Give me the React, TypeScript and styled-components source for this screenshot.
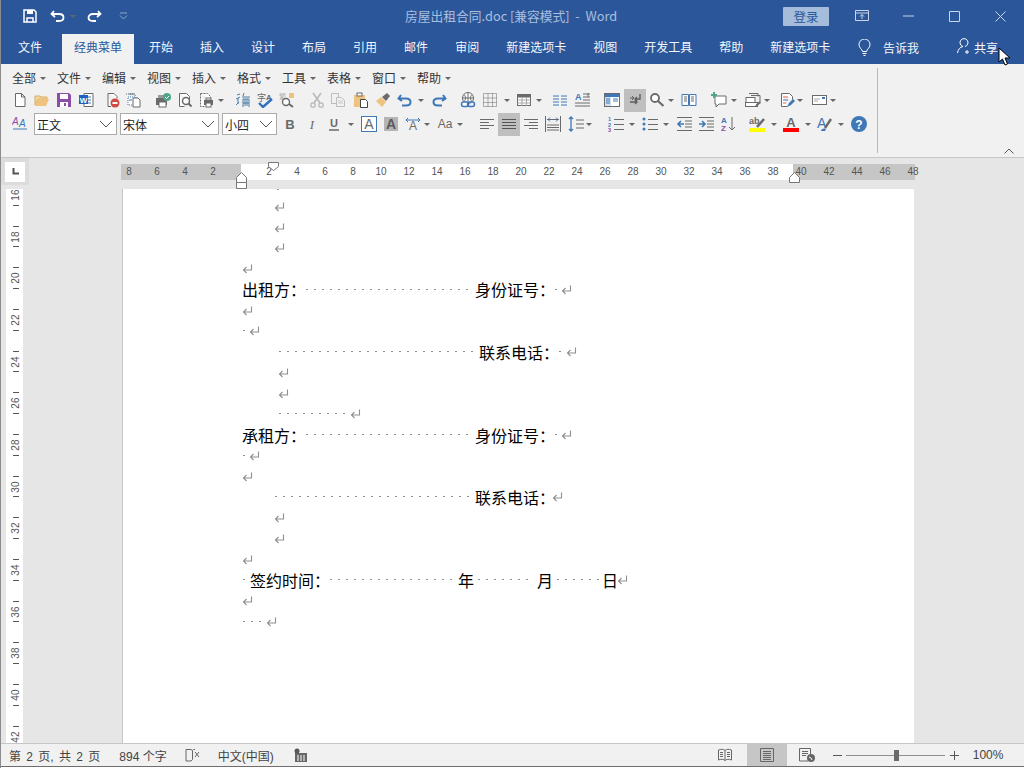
import React from "react";
import styled, { createGlobalStyle } from "styled-components";

const Global = createGlobalStyle`
  html, body { margin: 0; padding: 0; background: #fff; }
  #root { width: 1024px; height: 768px; overflow: hidden; }
`;

const UI = `"Noto Sans CJK SC", "Liberation Sans", sans-serif`;

const Win = styled.div`
  width: 1024px; height: 768px; display: flex; flex-direction: column; position: relative; overflow: hidden;
  box-sizing: border-box; border-left: 1px solid #8c8c8c; font-family: ${UI}; background: #fff;
`;
const TitleBar = styled.div`
  height: 32px; background: #2b579a; display: flex; align-items: center; position: relative; flex: none;
`;
const Qat = styled.div`display: flex; align-items: center; padding-left: 21px;`;
const QatSlot = styled.div<{ $w: number; $ml?: number }>`
  width: ${p => p.$w}px; margin-left: ${p => p.$ml ?? 0}px; display: flex; justify-content: center; align-items: center;
`;
const DocTitle = styled.div`
  position: absolute; left: 404px; top: 6px; font-size: 12.75px; line-height: 20px; color: #a9bfdf; white-space: pre;
`;
const TitleRight = styled.div`margin-left: auto; display: flex; align-items: center; padding-right: 1px;`;
const Login = styled.div`
  width: 46px; height: 19px; background: #a5bcdb; color: #2b579a; font-size: 12.5px; line-height: 19px; text-align: center;
  border-radius: 1px; margin-right: 10px;
`;
const WinBtn = styled.div`width: 46px; display: flex; justify-content: center;`;
const TabBar = styled.div`
  height: 32px; background: #2b579a; display: flex; align-items: flex-end; padding-left: 17px; gap: 27px; position: relative; flex: none;
`;
const Tab = styled.div<{ $active?: boolean }>`
  height: 30px; line-height: 26px; font-size: 12px; white-space: nowrap;
  color: ${p => (p.$active ? "#2b579a" : "#f3f6fb")};
  background: ${p => (p.$active ? "#f1f1f1" : "transparent")};
  ${p => (p.$active ? "padding: 0 12px; margin: 0 -12px 0 -7px;" : "")}
`;
const TabRight = styled.div`
  margin-left: auto; display: flex; align-items: center; height: 27px; align-self: flex-start; margin-top: 2px;
  font-size: 12px; color: #f3f6fb; line-height: 20px; padding-right: 26px;
`;
const Ribbon = styled.div`
  height: 94px; background: #f1f1f1; flex: none; position: relative; box-sizing: border-box;
  border-bottom: 1px solid #c6c6c6; padding-top: 4px;
`;
const MenuRow = styled.div`display: flex; height: 20px; padding-left: 11px; align-items: center;`;
const MenuItem = styled.div`
  width: 45px; font-size: 12px; color: #333; display: flex; align-items: center; gap: 4px; white-space: nowrap; line-height: 20px;
`;
const Caret = styled.i<{ $dim?: boolean }>`
  display: block; width: 0; height: 0; border-left: 3px solid transparent; border-right: 3px solid transparent;
  border-top: 3px solid ${p => (p.$dim ? "#888" : "#666")}; flex: none;
`;
const ToolRow = styled.div`display: flex; align-items: center; height: 24px;`;
const ToolSlot = styled.div<{ $ml: number; $w: number; $on?: boolean }>`
  margin-left: ${p => p.$ml}px; width: ${p => p.$w}px; height: 23px; flex: none; display: flex; align-items: center; justify-content: center;
  background: ${p => (p.$on ? "#bfbfbf" : "transparent")};
`;
const Select = styled.div<{ $ml: number; $w: number }>`
  margin-left: ${p => p.$ml}px; width: ${p => p.$w}px; height: 22px; box-sizing: border-box; flex: none; background: #fff; border: 1px solid #ababab;
  display: flex; align-items: center; justify-content: space-between; padding: 0 3px 0 2px; font-size: 12px; color: #222;
`;
const RibbonDivider = styled.div`position: absolute; left: 876px; top: 4px; bottom: 4px; width: 1px; background: #b8b8b8;`;
const Collapse = styled.div`position: absolute; right: 10px; bottom: 3px; line-height: 0;`;

const RulerBar = styled.div`height: 31px; background: #e6e6e6; display: flex; align-items: flex-start; position: relative; flex: none;`;
const Corner = styled.div`
  margin-left: 0; width: 28px; height: 27px; background: #dcdcdc; display: flex; align-items: center; justify-content: center; flex: none;
`;
const CornerBox = styled.div`
  width: 20px; height: 20px; background: #fff; display: flex; align-items: center; justify-content: center;
`;
const Segment = styled.div<{ $w: number; $light?: boolean; $ml: number; $pl: number }>`
  width: ${p => p.$w}px; margin-left: ${p => p.$ml}px; padding-left: ${p => p.$pl}px; height: 16px; margin-top: 6px; flex: none; box-sizing: border-box;
  background: ${p => (p.$light ? "#fff" : "#c6c6c6")}; display: flex;
`;
const RulerNum = styled.div<{ $pull?: boolean }>`
  width: 28px; flex: none; text-align: center; font: 10px/16px "Liberation Sans", sans-serif; color: #555;
  margin-left: ${p => (p.$pull ? -6 : 0)}px;
`;
const Marker = styled.svg<{ $x: number; $y: number }>`position: absolute; left: ${p => p.$x}px; top: ${p => p.$y}px;`;

const Main = styled.div`flex: 1; display: flex; background: #e6e6e6; min-height: 0; overflow: hidden;`;
const VRuler = styled.div`
  margin-left: 5px; width: 17px; background: #fff; flex: none; height: 100%; overflow: hidden; display: flex; flex-direction: column;
`;
const VCell = styled.div`
  height: 41.67px; flex: none; box-sizing: border-box; padding: 10px 0; display: flex; flex-direction: column; align-items: center;
  &:first-child { margin-top: -15px; }
`;
const VTick = styled.i`display: block; width: 6px; height: 1px; background: #555; flex: none; margin-left: 3px;`;
const VNum = styled.div`
  flex: 1; writing-mode: vertical-rl; transform: rotate(180deg); font: 10px/10px "Liberation Sans", sans-serif; color: #555;
  display: flex; align-items: center; justify-content: center; margin-left: 3px;
`;
const PageWrap = styled.div`margin-left: 99px; flex: none; width: 792px; box-sizing: border-box; background: #fff; border-left: 1px solid #c6c6c6; padding: 7px 0 0 119px;`;
const TopDot = styled.div`width: 2px; height: 1px; margin: -7px 0 6px 35px; background: #999;`;
const Line = styled.div<{ $indent?: number }>`
  height: 20.75px; display: flex; align-items: center; padding-left: ${p => p.$indent ?? 0}px; font-size: 16px; color: #000; white-space: nowrap;
`;
const Spaces = styled.span<{ $w: number; $ml?: number }>`
  display: block; width: ${p => p.$w}px; height: 1px; margin-left: ${p => p.$ml ?? 0}px; flex: none;
  background: repeating-linear-gradient(90deg, #8d8d8d 0 2px, transparent 2px 8px);
`;
const Word = styled.span<{ $ml?: number }>`margin-left: ${p => p.$ml ?? 0}px; font-family: ${UI}; flex: none;`;
const ReturnMark = styled.svg<{ $ml?: number }>`margin-left: ${p => p.$ml ?? 0}px; flex: none;`;

const Status = styled.div`
  height: 22px; flex: none; background: #f1f1f1; border-top: 1px solid #c6c6c6; box-sizing: content-box; display: flex; align-items: center;
  font-size: 12px; color: #444; padding-left: 8px; position: relative;
`;
const StatusText = styled.span<{ $ml: number; $ws?: number }>`
  margin-left: ${p => p.$ml}px; white-space: pre; font-family: "Liberation Sans", "Noto Sans CJK SC", sans-serif; word-spacing: ${p => p.$ws ?? 0}px;
`;
const StatusIcon = styled.div<{ $ml: number; $w?: number; $on?: boolean }>`
  margin-left: ${p => p.$ml}px; width: ${p => p.$w ?? 16}px; height: 22px; flex: none; display: flex; align-items: center; justify-content: center;
  background: ${p => (p.$on ? "#c6c6c6" : "transparent")};
`;
const Slider = styled.div`width: 99px; height: 1px; background: #8f8f8f; position: relative; flex: none;`;
const Thumb = styled.i`position: absolute; left: 48px; top: -5px; width: 5px; height: 11px; background: #6b6b6b; display: block;`;
const Foot = styled.div`height: 1px; background: #6e6e6e; flex: none;`;
const FootStrip = styled.div`height: 1px; background: #fff; flex: none;`;
const Pointer = styled.svg`position: absolute; left: 997px; top: 47px;`;

const Svg: React.FC<{ children: React.ReactNode; w?: number; h?: number }> = ({ children, w = 16, h = 16 }) => (
  <svg width={w} height={h} viewBox={`0 0 ${w} ${h}`} fill="none">{children}</svg>
);

const B = "#3f78b7", G = "#6a6a6a", P = "#8a4ea6", T = "#eec27f", L = "#a8a8a8";

const icons: Record<string, React.ReactNode> = {
  newDoc: <path d="M3.5 1.5h6l3.5 3.5v9.5h-9.5z M9.5 1.5V5H13" fill="#fff" stroke={G} />,
  open: <><path d="M1 13V4h5l1 1h6v2H4z" fill="#f3d7a5" stroke="#d9ac62" /><path d="M1 14l3-7h11l-3 7z" fill={T} /></>,
  save: <><path d="M1 1h12l2 2v12H1z" fill={P} /><rect x="4" y="2" width="8" height="5" fill="#fff" /><rect x="4" y="10" width="8" height="5" fill="#fff" /><rect x="8" y="11" width="2" height="3" fill={P} /></>,
  word: <><path d="M6 1.5h9v13H6z" fill="#fff" stroke={G} /><path d="M9 5h4M9 8h4M9 11h4" stroke={B} /><rect x="1" y="3" width="9" height="9" fill="#1f5fbf" /><text x="5.5" y="10.5" fontSize="8" fontWeight="700" textAnchor="middle" fill="#fff" fontFamily="Liberation Sans">W</text></>,
  stop: <><path d="M3 1.5h6l3 3v2M3 1.5v13h3" stroke={G} fill="#fff" /><circle cx="10" cy="11" r="4.5" fill="#d24a43" /><rect x="7.5" y="10" width="5" height="2" fill="#fff" /></>,
  pages: <><path d="M1 2h9v3" stroke={G} strokeDasharray="1 1" /><path d="M3 5h8v8H3z" fill="#fff" stroke={B} strokeDasharray="1 1" /><path d="M8 6h5l2 2v7H8z" fill="#fff" stroke={G} /><path d="M4 2h5M4 8h3" stroke={B} /></>,
  printer: <><rect x="1" y="6" width="11" height="7" fill={G} /><rect x="4" y="10" width="7" height="5" fill="#fff" stroke={G} /><rect x="3" y="3" width="7" height="3" fill="#9a9a9a" /><circle cx="12" cy="5" r="4" fill="#4fa58a" /><path d="M10 5l1.5 1.5L14 4" stroke="#fff" /></>,
  preview: <><path d="M2.5 1.5h7l3 3v4M2.5 1.5v13h5" fill="#fff" stroke={G} /><circle cx="9" cy="9" r="3.5" stroke={G} fill="#fff" strokeWidth="1.5" /><path d="M11.5 11.5l3 3" stroke={G} strokeWidth="2" /></>,
  printDoc: <><path d="M2.5 1.5h7l3 3v3M2.5 1.5v13h5" fill="#fff" stroke={G} strokeDasharray="2 1" /><rect x="6" y="8" width="9" height="5" fill={G} /><rect x="8" y="6" width="5" height="2" fill="#fff" stroke={G} /><rect x="8" y="11" width="5" height="4" fill="#fff" stroke={G} /></>,
  simp: <><path d="M2 3l3-1M1 7l4-2M3 6v6M1 13l3-3" stroke="#4a7da8" /><path d="M9 1l-1 3M7 5h8M8 7h6v8M8 7v8M10 7v7M12 7v7M8 11h6" stroke="#4a7da8" /></>,
  spell: <><text x="0" y="9" fontSize="9" fill={G} fontFamily="Noto Sans CJK SC">字</text><text x="9" y="8" fontSize="8" fontWeight="700" fill={G} fontFamily="Liberation Sans">A</text><path d="M2 11l4 4 9-8" stroke="#2f6fbf" strokeWidth="2.4" /></>,
  research: <><text x="0" y="7" fontSize="7" fill={L} fontFamily="Noto Sans CJK SC">繁</text><path d="M10 1h5v5h-5z" fill={T} /><circle cx="7" cy="10" r="3.5" stroke={G} strokeWidth="1.4" fill="#fff" /><path d="M10 12l4 3" stroke={G} strokeWidth="2" /></>,
  cut: <><path d="M4 1l7 10M12 1L5 11" stroke="#b9b9b9" strokeWidth="1.6" /><circle cx="4" cy="13" r="2.2" stroke="#b9b9b9" strokeWidth="1.3" /><circle cx="12" cy="13" r="2.2" stroke="#b9b9b9" strokeWidth="1.3" /></>,
  copy: <><path d="M1.5 1.5h7v10h-7z" fill="#f1f1f1" stroke="#bdbdbd" /><path d="M6.5 5.5h5l3 3v6h-8z" fill="#f1f1f1" stroke="#bdbdbd" /><path d="M8 9h5M8 11h5" stroke="#c9c9c9" /></>,
  paste: <><path d="M1 3h11v12H1z" fill={T} /><rect x="4" y="1" width="5" height="3" fill="#fff" stroke={G} /><path d="M7.5 7.5h5l2 2v6h-7z" fill="#fff" stroke="#444" /></>,
  brush: <><path d="M1 9l5-4 5 5-4 5z" fill={T} /><path d="M7 5l5-4 3 3-4 5z" fill={G} /></>,
  undo: <path d="M4 3L1.500 6.500 5 9M2 6.500h7c6 0 6 7 0 7H5" stroke={B} strokeWidth="2" />,
  redo: <path d="M12 3l2.500 3.500L11 9M14 6.500H7c-6 0-6 7 0 7h4" stroke={B} strokeWidth="2" />,
  link: <><circle cx="8" cy="6" r="5.500" stroke={G} fill="#fff" /><path d="M2.500 6h11M8 .5v11M4 2.500c2 2 2 5 0 7M12 2.500c-2 2-2 5 0 7" stroke={G} /><rect x="1.500" y="10" width="7" height="4.500" rx="2.200" stroke={B} strokeWidth="1.500" fill="#fff" /><rect x="7.500" y="10" width="7" height="4.500" rx="2.200" stroke={B} strokeWidth="1.500" /></>,
  grid: <path d="M1.500 1.500h13v13h-13zM6 1.500v13M10.500 1.500v13M1.500 6h13M1.500 10.500h13" stroke={G} strokeDasharray="1 1" />,
  table: <><rect x="1.500" y="2.500" width="13" height="11" fill="#fff" stroke={G} /><rect x="1.500" y="2.500" width="13" height="3" fill={G} /><path d="M1.500 8h13M1.500 11h13M6 5v9M10.500 5v9" stroke={L} /></>,
  cols: <path d="M1 4h6M1 7h6M1 10h6M1 13h6M9 4h6M9 7h6M9 10h6M9 13h6" stroke={B} />,
  dirText: <><text x="1" y="8" fontSize="9" fontWeight="700" fill={B} fontFamily="Liberation Sans">A</text><path d="M9 2h7M9 5h7M9 8h7M1 11h15M1 14h15" stroke={G} /><path d="M14 1v4" stroke={G} /></>,
  nav: <><rect x=".5" y="1.500" width="15" height="13" fill="#fff" stroke={G} /><rect x="1" y="2" width="14" height="3" fill={B} /><rect x="1" y="5" width="6" height="9" fill="#cfe0f2" /><path d="M2 7h4M2 9h4M2 11h4M9 7h5M9 9h5" stroke={B} /></>,
  pilcrow: <><path d="M13 2v5H8M10 5L8 7l2 2" stroke="#5f5f5f" strokeWidth="1.400" /><path d="M3 10h7M8 8l2 2-2 2" stroke="#5f5f5f" strokeWidth="1.400" /><path d="M3 6h3M5 4l2 2-2 2" stroke="#5f5f5f" /></>,
  search: <><circle cx="6" cy="6" r="4" stroke={G} strokeWidth="1.800" fill="#fff" /><path d="M9 9l5.500 5" stroke={G} strokeWidth="2.200" /></>,
  book: <><path d="M1 2.500h6.500v11H1zM8.500 2.500H15v11H8.500z" fill="#fff" stroke={B} /><path d="M3 5h3M3 7h3M3 9h3M10 5h3M10 7h3M10 9h3" stroke={G} /></>,
  comment: <><path d="M4 4h11v8H8l-3 3v-3H4z" fill="#fff" stroke={G} /><path d="M3 0v6M0 3h6" stroke="#4fa58a" strokeWidth="2" /></>,
  stack: <><path d="M4 1.500h9v3M6 3.500h9v8" stroke={G} /><rect x="1" y="5.500" width="9" height="6" fill="#fff" stroke={G} /><rect x=".5" y="10.500" width="12" height="4" fill="#fff" stroke={G} /><path d="M11 14l4-4" stroke={G} strokeWidth="2" /></>,
  track: <><path d="M2.500 1.500h8l3 3v3M2.500 1.500v13h6" fill="#fff" stroke={G} /><path d="M4 5h5M4 11h3" stroke="#d9684a" /><path d="M4 8h5" stroke={B} /><path d="M8 15l2-4 4-4 2 2-4 4z" fill={B} /></>,
  env: <><rect x="1.500" y="3.500" width="14" height="9" fill="#fff" stroke={G} /><path d="M3 7h6M3 9h4" stroke={L} /><rect x="11" y="5" width="3" height="2" fill={B} /></>,
  style: <><text x="0" y="9" fontSize="10" fontStyle="italic" fill={P} fontFamily="Liberation Sans">A</text><text x="7" y="11" fontSize="10" fontStyle="italic" fill={B} fontFamily="Liberation Sans">A</text><path d="M1 13h14" stroke={B} /></>,
  bold: <text x="8" y="13" fontSize="13" fontWeight="700" textAnchor="middle" fill={G} fontFamily="Liberation Sans">B</text>,
  italic: <text x="8" y="13" fontSize="13" fontStyle="italic" textAnchor="middle" fill={G} fontFamily="Liberation Serif">I</text>,
  under: <><text x="8" y="11" fontSize="11" fontWeight="700" textAnchor="middle" fill={G} fontFamily="Liberation Sans">U</text><path d="M3 14h10" stroke={G} strokeWidth="1.500" /></>,
  boxA: <><rect x=".5" y=".5" width="15" height="15" fill="#fff" stroke={B} /><text x="8" y="13" fontSize="14" textAnchor="middle" fill={G} fontFamily="Liberation Sans">A</text></>,
  shadeA: <><rect x="1" y="1" width="14" height="14" fill="#b5b5b5" /><text x="8" y="13" fontSize="14" fontWeight="700" textAnchor="middle" fill="#5a5a5a" fontFamily="Liberation Sans">A</text></>,
  phon: <><text x="8" y="14" fontSize="12" textAnchor="middle" fill={G} fontFamily="Liberation Sans">A</text><path d="M1 4h14M1 4l2-2M1 4l2 2M15 4l-2-2M15 4l-2 2" stroke={B} /></>,
  case: <text x="8" y="12" fontSize="12" textAnchor="middle" fill={G} fontFamily="Liberation Sans">Aa</text>,
  left: <path d="M1 3.500h14M1 6.500h9M1 9.500h14M1 12.500h9" stroke={G} />,
  center: <path d="M1 3.500h14M1 6.500h14M1 9.500h14M1 12.500h14" stroke="#555" />,
  right: <path d="M1 3.500h14M6 6.500h9M1 9.500h14M6 12.500h9" stroke={G} />,
  dist: <><path d="M.5 0v16M15.500 0v16M2 3.500h12M2 9h12M2 11.500h12M2 14h12" stroke={G} /><path d="M3 3.500l2-2M3 3.500l2 2M13 3.500l-2-2M13 3.500l-2 2" stroke={B} /></>,
  spacing: <><path d="M3 1v14M1 3l2-2 2 2M1 13l2 2 2-2" stroke={B} strokeWidth="1.300" /><path d="M8 4h8M8 8h8M8 12h8" stroke={G} /></>,
  number: <><path d="M6 3.500h10M6 8.500h10M6 13.500h10" stroke={G} /><text x="0" y="5" fontSize="5.500" fontWeight="700" fill={B} fontFamily="Liberation Sans">1</text><text x="0" y="10.500" fontSize="5.500" fontWeight="700" fill={B} fontFamily="Liberation Sans">2</text><text x="0" y="15.500" fontSize="5.500" fontWeight="700" fill={P} fontFamily="Liberation Sans">3</text></>,
  bullet: <><path d="M6 3.500h10M6 8.500h10M6 13.500h10" stroke={G} /><circle cx="2" cy="3" r="1.500" fill={B} /><circle cx="2" cy="8" r="1.500" fill={B} /><circle cx="2" cy="13" r="1.500" fill={B} /></>,
  outdent: <><path d="M1 1.500h15M9 5h7M9 8h7M9 11h7M1 14.500h15" stroke={G} /><path d="M8 8H2M5 5L2 8l3 3" stroke={B} strokeWidth="1.600" /></>,
  indent: <><path d="M1 1.500h15M9 5h7M9 8h7M9 11h7M1 14.500h15" stroke={G} /><path d="M1 8h6M4 5l3 3-3 3" stroke={B} strokeWidth="1.600" /></>,
  sort: <><text x="0" y="7" fontSize="8" fontWeight="700" fill={B} fontFamily="Liberation Sans">A</text><text x="0" y="15" fontSize="8" fontWeight="700" fill={P} fontFamily="Liberation Sans">Z</text><path d="M11 1v13M8 11l3 3 3-3" stroke={G} /></>,
  mark: <><text x="0" y="8" fontSize="9" fill={G} fontWeight="700" fontFamily="Liberation Sans">ab</text><path d="M8 11l7-8" stroke={G} strokeWidth="2.500" /><rect y="12" width="16" height="4" fill="#ffff00" /></>,
  fontColor: <><text x="8" y="11" fontSize="13" fontWeight="700" textAnchor="middle" fill={G} fontFamily="Liberation Sans">A</text><rect y="12" width="16" height="4" fill="#ff0000" /></>,
  effect: <><text x="0" y="12" fontSize="14" fill={B} fontFamily="Liberation Sans">A</text><path d="M8 12l6-9" stroke={G} strokeWidth="2.400" /><path d="M4 15c0-2 3-3 5-2l-1 2z" fill={B} /></>,
  help: <><circle cx="8" cy="8" r="8" fill={B} /><text x="8" y="12.500" fontSize="12" fontWeight="700" textAnchor="middle" fill="#fff" fontFamily="Liberation Sans">?</text></>,
};

type Tool = { at: number; kind: "icon" | "caret" | "select"; name?: string; w?: number; on?: boolean };
const ic = (c: number, name: string, on?: boolean, w = 16): Tool => ({ at: c - w / 2, kind: "icon", name, w, on });
const ca = (c: number): Tool => ({ at: c - 3, kind: "caret", w: 6 });
const sel = (at: number, w: number, name: string): Tool => ({ at, kind: "select", name, w });

const row1: Tool[] = [
  ic(20, "newDoc"), ic(42, "open"), ic(64, "save"), ic(86, "word"), ic(113, "stop"), ic(133, "pages"), ic(163, "printer"), ic(185, "preview"),
  ic(206, "printDoc"), ca(221), ic(243, "simp"), ic(265, "spell"), ic(287, "research"), ic(317, "cut"), ic(338, "copy"), ic(361, "paste"), ic(383, "brush"),
  ic(405, "undo"), ca(421), ic(439, "redo"), ic(468, "link"), ic(490, "grid"), ca(507), ic(524, "table"), ca(539), ic(560, "cols"), ic(582, "dirText"),
  ic(612, "nav"), ic(635, "pilcrow", true, 22), ic(657, "search"), ca(671), ic(689, "book"), ic(719, "comment"), ca(734), ic(753, "stack"), ca(767),
  ic(787, "track"), ca(800), ic(819, "env"), ca(833),
];
const row2: Tool[] = [
  ic(20, "style"), sel(34, 83, "正文"), sel(120, 99, "宋体"), sel(222, 55, "小四"), ic(290, "bold"), ic(312, "italic"), ic(334, "under"), ca(351),
  ic(369, "boxA"), ic(391, "shadeA"), ic(413, "phon"), ca(427), ic(445, "case"), ca(460), ic(487, "left"), ic(509, "center", true, 22), ic(531, "right"),
  ic(553, "dist"), ic(576, "spacing"), ca(589), ic(616, "number"), ca(632), ic(650, "bullet"), ca(666), ic(684, "outdent"), ic(706, "indent"), ic(729, "sort"),
  ic(757, "mark"), ca(774), ic(791, "fontColor"), ca(808), ic(825, "effect"), ca(841), ic(859, "help"),
];

const Chevron = () => (
  <Svg w={14} h={8}><path d="M1 1l6 6 6-6" stroke="#555" /></Svg>
);

const Tools: React.FC<{ items: Tool[] }> = ({ items }) => {
  let end = 1;
  return (
    <ToolRow>
      {items.map((t, i) => {
        const ml = t.at - end;
        end = t.at + (t.w ?? 16);
        if (t.kind === "select")
          return <Select key={i} $ml={ml} $w={t.w!}>{t.name}<Chevron /></Select>;
        return (
          <ToolSlot key={i} $ml={ml} $w={t.w!} $on={t.on}>
            {t.kind === "caret" ? <Caret /> : <Svg>{icons[t.name!]}</Svg>}
          </ToolSlot>
        );
      })}
    </ToolRow>
  );
};

const Ret: React.FC<{ ml?: number }> = ({ ml }) => (
  <ReturnMark $ml={ml} width="11" height="11" viewBox="0 0 11 11" fill="none">
    <path d="M9.500 1.500v5.500H1.500M4.500 4L1.500 7l3 3" stroke="#8f8f8f" strokeWidth="1.100" />
  </ReturnMark>
);

const Pair: React.FC<{ a?: string; w: number; label: string; trail: number; retMl: number }> = ({ a, w, label, trail, retMl }) => (
  <>
    {a && <Word>{a}</Word>}
    <Spaces $w={w} />
    <Word $ml={6}>{label}</Word>
    {trail > 0 && <Spaces $w={trail} />}
    <Ret ml={retMl} />
  </>
);

const tabs = ["文件", "经典菜单", "开始", "插入", "设计", "布局", "引用", "邮件", "审阅", "新建选项卡", "视图", "开发工具", "帮助", "新建选项卡"];
const menus = ["全部", "文件", "编辑", "视图", "插入", "格式", "工具", "表格", "窗口", "帮助"];
const vnums = [16, 18, 20, 22, 24, 26, 28, 30, 32, 34, 36, 38, 40, 42];

export default function App() {
  return (
    <Win>
      <Global />
      <TitleBar>
        <Qat>
          <QatSlot $w={16}>
            <Svg w={16} h={16}>
              <path d="M2 2h10l2 2v10H2z" stroke="#fff" strokeWidth="1.500" />
              <path d="M5 2h6v4H5z" fill="#fff" />
              <path d="M5 14v-4h6v4" stroke="#fff" strokeWidth="1.500" />
            </Svg>
          </QatSlot>
          <QatSlot $w={20} $ml={10}>
            <Svg><path d="M4 3L1.500 6 5 9M2 6h7c6 0 6 7 0 7H6" stroke="#fff" strokeWidth="1.800" /></Svg>
          </QatSlot>
          <QatSlot $w={6} $ml={2}><Caret /></QatSlot>
          <QatSlot $w={16} $ml={10}>
            <Svg><path d="M12 3l2.500 3L11 9M14 6H7c-6 0-6 7 0 7h3" stroke="#fff" strokeWidth="1.800" /></Svg>
          </QatSlot>
          <QatSlot $w={16} $ml={13}>
            <Svg w={9} h={8}><path d="M1 1h7M1 3.500l3.500 3.500L8 3.500" stroke="#8fa9cf" /></Svg>
          </QatSlot>
        </Qat>
        <DocTitle>房屋出租合同.doc [兼容模式]  -  Word</DocTitle>
        <TitleRight>
          <Login>登录</Login>
          <WinBtn>
            <Svg w={14} h={12}><path d="M.5.500h13v10H.5zM.5 3h13M7 9V4.500M5 6.500l2-2 2 2" stroke="#c8d5ea" /></Svg>
          </WinBtn>
          <WinBtn><Svg w={11} h={2}><path d="M0 1h11" stroke="#c8d5ea" /></Svg></WinBtn>
          <WinBtn><Svg w={11} h={11}><path d="M.5.500h10v10H.5z" stroke="#c8d5ea" /></Svg></WinBtn>
          <WinBtn><Svg w={11} h={11}><path d="M.5.500l10 10M10.500.500l-10 10" stroke="#c8d5ea" /></Svg></WinBtn>
        </TitleRight>
      </TitleBar>
      <TabBar>
        {tabs.map((t, i) => <Tab key={i} $active={i === 1}>{t}</Tab>)}
        <TabRight>
          <Svg w={13} h={18}><path d="M4.500 12.500C4 10 1 9 1 5.500a5.500 5.500 0 0 1 11 0C12 9 9 10 8.500 12.500zM4.500 14.500h4M5.500 16.500h2" stroke="#fff" /></Svg>
          <Word $ml={12}>告诉我</Word>
          <Word $ml={38}>
            <Svg w={14} h={17}><path d="M8 9.500a4 4 0 1 0-2 0c-3 .5-5 3-5.500 6.500M10 13v4M8 15h4" stroke="#fff" /></Svg>
          </Word>
          <Word $ml={3}>共享</Word>
        </TabRight>
      </TabBar>
      <Ribbon>
        <MenuRow>
          {menus.map(m => <MenuItem key={m}>{m}<Caret /></MenuItem>)}
        </MenuRow>
        <Tools items={row1} />
        <Tools items={row2} />
        <RibbonDivider />
        <Collapse><Svg w={10} h={6}><path d="M.5 5.500l4.500-4.500 4.500 4.500" stroke="#555" /></Svg></Collapse>
      </Ribbon>
      <RulerBar>
        <Corner>
          <CornerBox><Svg w={7} h={7}><path d="M1.500 0v5.500H7" stroke="#555" strokeWidth="2" /></Svg></CornerBox>
        </Corner>
        <Segment $w={120} $ml={92} $pl={0}>
          <RulerNum $pull>8</RulerNum>
          <RulerNum>6</RulerNum>
          <RulerNum>4</RulerNum>
          <RulerNum>2</RulerNum>
        </Segment>
        <Segment $w={552} $ml={0} $pl={14} $light>
          {Array.from({ length: 19 }, (_, i) => <RulerNum key={i}>{(i + 1) * 2}</RulerNum>)}
        </Segment>
        <Segment $w={122} $ml={0} $pl={0}>
          {[40, 42, 44, 46, 48].map((n, i) => <RulerNum key={n} $pull={i === 0}>{n}</RulerNum>)}
        </Segment>
        <Marker $x={267} $y={4} width="11" height="9" viewBox="0 0 11 9" fill="none">
          <path d="M.5.500h10v4l-5 4-5-4z" fill="#fff" stroke="#777" />
        </Marker>
        <Marker $x={235} $y={14} width="11" height="17" viewBox="0 0 11 17" fill="none">
          <path d="M.5 5.500l5-5 5 5v5h-10zM.5 10.500h10v6h-10z" fill="#fff" stroke="#777" />
        </Marker>
        <Marker $x={788} $y={14} width="11" height="11" viewBox="0 0 11 11" fill="none">
          <path d="M.5 5.500l5-5 5 5v5h-10z" fill="#fff" stroke="#777" />
        </Marker>
      </RulerBar>
      <Main>
        <VRuler>
          {vnums.map(n => (
            <VCell key={n}>
              <VTick />
              <VNum>{n}</VNum>
              <VTick />
            </VCell>
          ))}
        </VRuler>
        <PageWrap>
          <TopDot />
          <Line $indent={32}><Ret /></Line>
          <Line $indent={32}><Ret /></Line>
          <Line $indent={32}><Ret /></Line>
          <Line><Ret /></Line>
          <Line><Pair a="出租方：" w={163} label="身份证号：" trail={6} retMl={0} /></Line>
          <Line><Ret /></Line>
          <Line><Spaces $w={3} $ml={1} /><Ret ml={3} /></Line>
          <Line $indent={37}><Pair w={194} label="联系电话：" trail={6} retMl={1} /></Line>
          <Line $indent={36}><Ret /></Line>
          <Line $indent={36}><Ret /></Line>
          <Line $indent={37}><Spaces $w={68} /><Ret ml={3} /></Line>
          <Line><Pair a="承租方：" w={163} label="身份证号：" trail={6} retMl={0} /></Line>
          <Line><Spaces $w={3} $ml={1} /><Ret ml={3} /></Line>
          <Line><Ret /></Line>
          <Line $indent={33}><Pair w={194} label="联系电话：" trail={0} retMl={-3} /></Line>
          <Line $indent={32}><Ret /></Line>
          <Line $indent={32}><Ret /></Line>
          <Line><Ret /></Line>
          <Line>
            <Spaces $w={3} $ml={1} />
            <Word $ml={4}>签约时间：</Word>
            <Spaces $w={124} $ml={0} />
            <Word $ml={4}>年</Word>
            <Spaces $w={56} $ml={4} />
            <Word $ml={3}>月</Word>
            <Spaces $w={42} $ml={4} />
            <Word $ml={3}>日</Word>
            <Ret ml={-1} />
          </Line>
          <Line><Ret /></Line>
          <Line><Spaces $w={20} $ml={1} /><Ret ml={3} /></Line>
        </PageWrap>
      </Main>
      <Status>
        <StatusText $ml={0} $ws={2}>第 2 页, 共 2 页</StatusText>
        <StatusText $ml={19}>894 个字</StatusText>
        <StatusIcon $ml={18}>
          <Svg w={15} h={14}><path d="M1 1.500h5l1.500 1v9L6 13H1zM7.500 2.500l1-1H10" stroke="#666" /><path d="M10 4l4 5M14 4l-4 5" stroke="#666" /></Svg>
        </StatusIcon>
        <StatusText $ml={17}>中文(中国)</StatusText>
        <StatusIcon $ml={19}>
          <Svg w={13} h={14}><circle cx="3" cy="3" r="2.500" fill="#555" /><rect x="1" y="5" width="12" height="9" fill="#666" /><path d="M3 8h2M6 8h2M9 8h2M3 10h2M6 10h2M9 10h2M3 12h2M6 12h2M9 12h2" stroke="#fff" /></Svg>
        </StatusIcon>
        <StatusIcon $ml={408}>
          <Svg w={14} h={14}><path d="M.5 2C3 1 5.500 1 7 2.500 8.500 1 11 1 13.500 2v10C11 11 8.500 11 7 12.500 5.500 11 3 11 .5 12zM7 2.500v10M2 4.500h3M2 6.500h3M2 8.500h3M9 4.500h3M9 6.500h3M9 8.500h3" stroke="#666" /></Svg>
        </StatusIcon>
        <StatusIcon $ml={14} $w={40} $on>
          <Svg w={14} h={14}><path d="M.5.500h13v13H.5zM3 3.500h8M3 5.500h8M3 7.500h8M3 9.500h8M3 11.500h8" stroke="#666" /></Svg>
        </StatusIcon>
        <StatusIcon $ml={12}>
          <Svg w={16} h={14}><path d="M9 13H.5V.5h11V6M3 3.500h6M3 5.500h6M3 7.500h4" stroke="#666" /><circle cx="12" cy="10" r="4" fill="#666" /><path d="M10 9l2 1 1 2" stroke="#fff" /></Svg>
        </StatusIcon>
        <StatusIcon $ml={15}><Svg w={9} h={3}><path d="M0 1.500h9" stroke="#555" /></Svg></StatusIcon>
        <Slider><Thumb /></Slider>
        <StatusIcon $ml={2}><Svg w={9} h={9}><path d="M0 4.500h9M4.500 0v9" stroke="#555" /></Svg></StatusIcon>
        <StatusText $ml={10}>100%</StatusText>
      </Status>
      <Foot />
      <FootStrip />
      <Pointer width="13" height="19" viewBox="0 0 13 19">
        <path d="M1 1v14l3.500-3 2.500 6 2.500-1-2.500-6H12z" fill="#fff" stroke="#000" />
      </Pointer>
    </Win>
  );
}
